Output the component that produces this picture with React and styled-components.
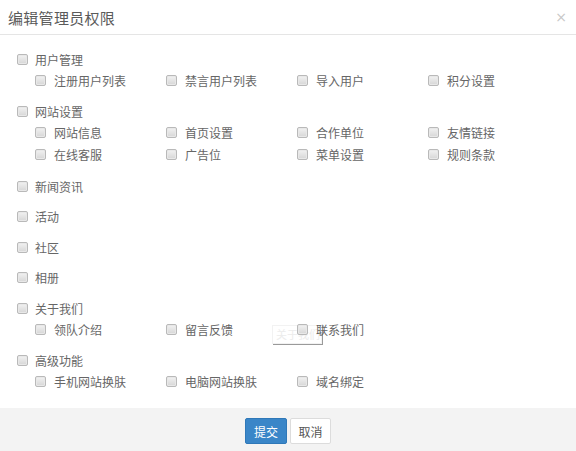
import styled, { createGlobalStyle } from 'styled-components';

const GlobalStyle = createGlobalStyle`
  html, body {
    margin: 0;
    padding: 0;
    background: #fff;
  }
  body {
    font-family: "Noto Sans CJK SC", "Noto Sans", sans-serif;
    font-size: 12px;
    color: #666;
  }
`;

const groups = [
  { name: '用户管理', items: ['注册用户列表', '禁言用户列表', '导入用户', '积分设置'] },
  {
    name: '网站设置',
    items: ['网站信息', '首页设置', '合作单位', '友情链接', '在线客服', '广告位', '菜单设置', '规则条款'],
  },
  { name: '新闻资讯' },
  { name: '活动' },
  { name: '社区' },
  { name: '相册' },
  { name: '关于我们', items: ['领队介绍', '留言反馈', '联系我们'] },
  { name: '高级功能', items: ['手机网站换肤', '电脑网站换肤', '域名绑定'] },
];

const App = () => {
  return (
    <>
      <GlobalStyle />
      <StDialog>
        <StHeader>
          <StTitle>编辑管理员权限</StTitle>
          <StClose>×</StClose>
        </StHeader>

        <StBody>
          <StGhostTip>关于我们</StGhostTip>
          {groups.map((g) => (
            <StGroup key={g.name}>
              <StTopRow>
                <StCheck />
                <span>{g.name}</span>
              </StTopRow>
              {g.items && (
                <StSubGrid>
                  {g.items.map((it) => (
                    <StSubItem key={it}>
                      <StCheck />
                      <span>{it}</span>
                    </StSubItem>
                  ))}
                </StSubGrid>
              )}
            </StGroup>
          ))}
        </StBody>

        <StFooter>
          <StButton $primary>提交</StButton>
          <StButton>取消</StButton>
        </StFooter>
      </StDialog>
    </>
  );
};

export default App;

const StDialog = styled.div`
  width: 576px;
  height: 451px;
  display: flex;
  flex-direction: column;
  background: #fff;
  overflow: hidden;
`;

const StHeader = styled.div`
  height: 35px;
  box-sizing: border-box;
  border-bottom: 1px solid #e5e5e5;
  display: flex;
  align-items: center;
  justify-content: space-between;
  padding: 0 9px 0 8px;
`;

const StTitle = styled.div`
  font-size: 15px;
  color: #5a5a5a;
  letter-spacing: 0.3px;
`;

const StClose = styled.div`
  font-family: "DejaVu Sans", sans-serif;
  font-size: 14px;
  color: #c8c8c8;
  line-height: 1;
`;

const StBody = styled.div`
  position: relative;
  flex: 1;
  padding: 14px 0 0 17px;
  display: flex;
  flex-direction: column;
  gap: 10.5px;
`;

const StGroup = styled.div`
  position: relative;
  display: flex;
  flex-direction: column;
`;

const StTopRow = styled.label`
  height: 20px;
  display: flex;
  align-items: center;
  gap: 7px;
`;

const StSubGrid = styled.div`
  display: grid;
  grid-template-columns: repeat(4, 131px);
  grid-auto-rows: 22px;
  padding-left: 18px;
`;

const StSubItem = styled.label`
  display: flex;
  align-items: center;
  gap: 8px;
`;

const StCheck = styled.span`
  width: 11px;
  height: 11px;
  box-sizing: border-box;
  flex: none;
  border: 1px solid #b9b9b9;
  border-radius: 2px;
  background: linear-gradient(#f2f2f2, #d6d6d6);
  box-shadow: inset 0 0 0 1px #e8e8e8;
`;

const StGhostTip = styled.div`
  position: absolute;
  left: 272px;
  top: 290px;
  width: 50px;
  height: 19px;
  box-sizing: border-box;
  padding-left: 3px;
  font-size: 11px;
  line-height: 17px;
  white-space: nowrap;
  overflow: hidden;
  color: #ececec;
  border: 1px solid #f2f2f2;
  box-shadow: 1px 1px 0 #9a9a9a;
`;

const StFooter = styled.div`
  height: 43px;
  box-sizing: border-box;
  background: #f3f3f3;
  display: flex;
  justify-content: center;
  align-items: flex-start;
  padding-top: 10px;
  gap: 3px;
`;

const StButton = styled.button`
  height: 26px;
  width: ${(p) => (p.$primary ? '42px' : '41px')};
  padding: 0;
  font-family: "Noto Sans CJK SC", sans-serif;
  font-size: 12px;
  border-radius: 2px;
  border: 1px solid ${(p) => (p.$primary ? '#2f78b8' : '#dcdcdc')};
  background: ${(p) => (p.$primary ? '#3a86c8' : '#fff')};
  color: ${(p) => (p.$primary ? '#fff' : '#555')};
`;
